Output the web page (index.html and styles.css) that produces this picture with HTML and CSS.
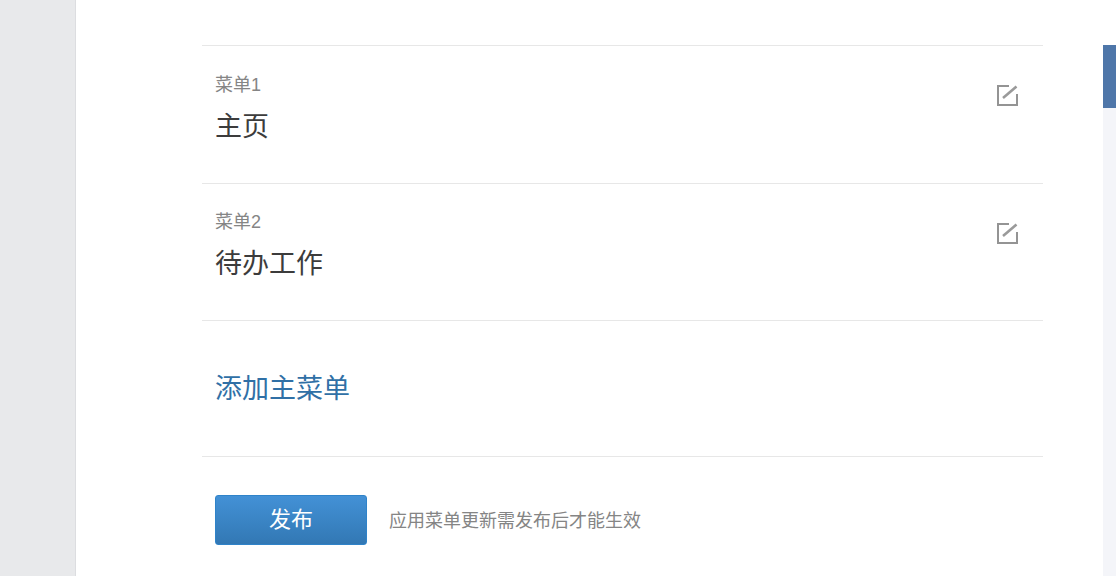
FILE: index.html
```html
<!DOCTYPE html>
<html lang="zh">
<head>
<meta charset="utf-8">
<title>菜单</title>
<link rel="stylesheet" href="styles.css">
</head>
<body>
<div class="page">
  <aside class="side"></aside>
  <main class="main">
    <section class="list">
      <div class="row menu-row">
        <div class="info">
          <div class="label">菜单1</div>
          <div class="name">主页</div>
        </div>
        <svg class="edit" width="24" height="24" viewBox="0 0 24 24"><path d="M13 2H2v19h19V10" fill="none" stroke="#949494" stroke-width="2"/><path d="M7 14 20.5 2.5" fill="none" stroke="#9a9a9a" stroke-width="2.6"/></svg>
      </div>
      <div class="row menu-row second">
        <div class="info">
          <div class="label">菜单2</div>
          <div class="name">待办工作</div>
        </div>
        <svg class="edit" width="24" height="24" viewBox="0 0 24 24"><path d="M13 2H2v19h19V10" fill="none" stroke="#949494" stroke-width="2"/><path d="M7 14 20.5 2.5" fill="none" stroke="#9a9a9a" stroke-width="2.6"/></svg>
      </div>
      <div class="row add-row"><a class="add">添加主菜单</a></div>
      <div class="actions">
        <button class="publish">发布</button>
        <span class="hint">应用菜单更新需发布后才能生效</span>
      </div>
    </section>
    <div class="scroll"><div class="thumb"></div></div>
  </main>
</div>
</body>
</html>
```
FILE: styles.css
```css
* { box-sizing: border-box; }
html, body { margin: 0; height: 100%; overflow: hidden; }
body { font-family: "Liberation Sans", "Noto Sans CJK SC", sans-serif; background: #fff; }
.page { display: flex; height: 576px; }
.side { width: 76px; background: #e8e9eb; border-right: 1px solid #dcdde0; flex: none; }
.main { flex: 1; display: flex; padding-left: 126px; }
.list { width: 841px; padding-top: 45px; flex: none; }
.row { border-top: 1px solid #e7e7e7; padding: 0 13px; }
.menu-row { height: 138px; display: flex; justify-content: space-between; align-items: flex-start; padding-top: 27px; }
.menu-row.second { height: 137px; padding-top: 26px; }
.label { font-size: 18px; line-height: 24px; color: #858585; }
.name { font-size: 27px; line-height: 38px; margin-top: 11px; color: #3c3c3c; }
.edit { margin: 11px 10px 0 0; flex: none; }
.second .edit { margin-top: 12px; }
.add-row { height: 136px; display: flex; align-items: center; padding-bottom: 4px; }
.add { font-size: 27px; color: #3070a6; }
.actions { border-top: 1px solid #e7e7e7; padding: 38px 13px 0; display: flex; align-items: center; gap: 22px; }
.publish { width: 152px; height: 50px; border: 1px solid #2f83c9; border-radius: 3px; background: linear-gradient(#4391d6, #3278b4); color: #fff; font: 22px/44px "Liberation Sans", "Noto Sans CJK SC", sans-serif; padding: 0; }
.hint { font-size: 18px; color: #858585; padding-bottom: 2px; }
.scroll { width: 13px; margin-left: 60px; background: #f4f5f9; margin-top: 45px; flex: none; }
.thumb { height: 63px; background: #4e76a9; }
```
